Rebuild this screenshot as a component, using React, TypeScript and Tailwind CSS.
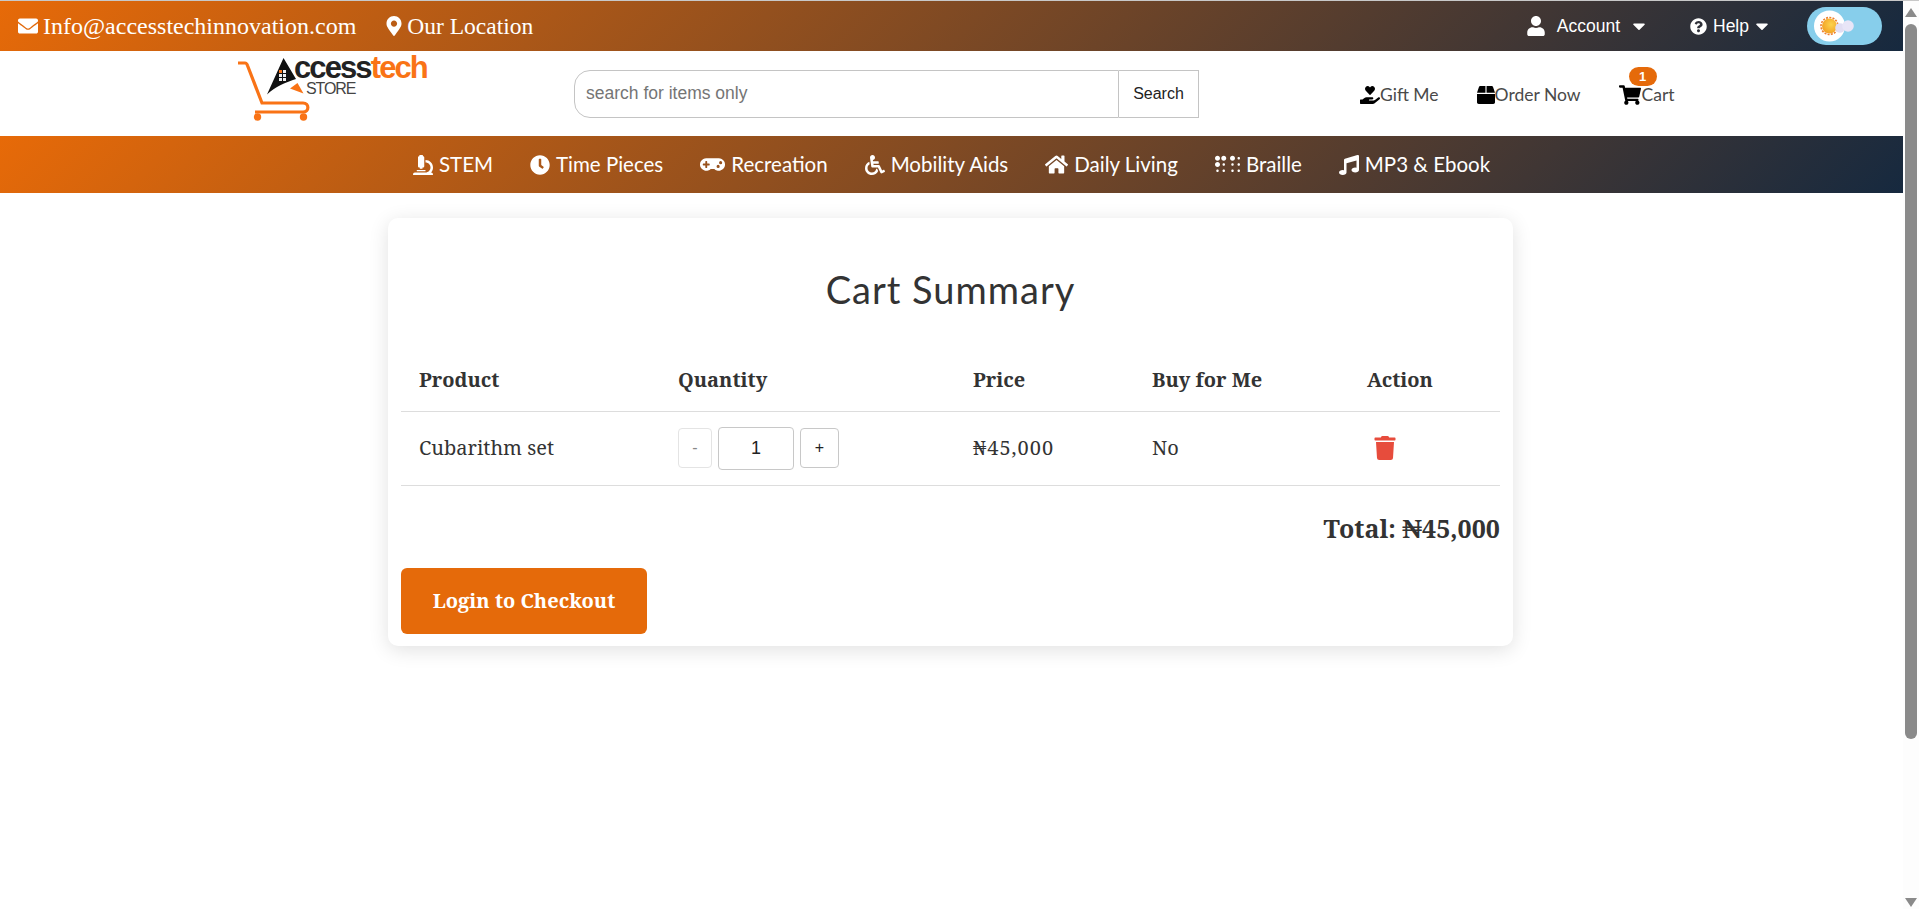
import { FaBox, FaBraille, FaCaretDown, FaClock, FaEnvelope, FaGamepad, FaHandHoldingHeart, FaHome, FaMapMarkerAlt, FaMicroscope, FaMusic, FaQuestionCircle, FaShoppingCart, FaTrash, FaUser, FaWheelchair } from 'react-icons/fa';

const navItems = [
  { label: 'STEM', icon: FaMicroscope, size: 20 },
  { label: 'Time Pieces', icon: FaClock, size: 20 },
  { label: 'Recreation', icon: FaGamepad, size: 25 },
  { label: 'Mobility Aids', icon: FaWheelchair, size: 20 },
  { label: 'Daily Living', icon: FaHome, size: 23 },
  { label: 'Braille', icon: FaBraille, size: 25 },
  { label: 'MP3 & Ebook', icon: FaMusic, size: 20 },
];

const barGradient = 'bg-[linear-gradient(135deg,#e76a08,#16293f)]';
const cellFont = "font-['Noto_Serif','DejaVu_Serif',serif]";

function Logo() {
  return (
    <div className="relative self-start mt-[4px] w-[190px] h-[70px]">
      <svg width="190" height="70" viewBox="0 0 190 70" className="absolute inset-0">
        {/* cart */}
        <path d="M1 8h7c1.5 0 2 1 2.500 2.500L25 48h41c6.500 0 6.500 9 0 9H18" fill="none" stroke="#f97316" strokeWidth="3.2" />
        <circle cx="20.500" cy="62" r="3.700" fill="#f97316" />
        <circle cx="66.500" cy="62" r="3.700" fill="#f97316" />
        {/* roof */}
        <path d="M46.500 3 30 39.500C38 32 49 27 59 24z" fill="#111" />
        <path d="M53 33.500 60.500 28l6 10.500z" fill="#f97316" />
        {/* windows */}
        <g fill="#eee">
          <rect x="42" y="15" width="3" height="3" fill="#f97316" />
          <rect x="46" y="15" width="3" height="3" />
          <rect x="42" y="19" width="3" height="3" />
          <rect x="46" y="19" width="3" height="3" />
          <rect x="42" y="23" width="3" height="3" />
          <rect x="46" y="23" width="3" height="3" />
        </g>
      </svg>
      <span className="absolute left-[57px] top-[-1px] font-['Liberation_Sans',sans-serif] font-bold text-[31px] leading-[28px] tracking-[-1.9px] text-[#222]">
        ccess<span className="text-[#f97316]">tech</span>
      </span>
      <span className="absolute left-[69px] top-[27px] font-['Liberation_Sans',sans-serif] text-[16px] leading-[14px] tracking-[-1.1px] text-[#444]">STORE</span>
    </div>
  );
}

function ThemeToggle() {
  return (
    <div className="w-[75px] h-[38px] rounded-full bg-[#87ceeb]">
      <svg width="75" height="38" viewBox="0 0 75 38">
        <defs>
          <radialGradient id="sun" cx="0.6" cy="0.4" r="0.7">
            <stop offset="0" stopColor="#fcd34d" />
            <stop offset="1" stopColor="#f29c1f" />
          </radialGradient>
        </defs>
        <circle cx="22.500" cy="19" r="15.500" fill="#fff" />
        <circle cx="22.500" cy="19" r="8.500" fill="none" stroke="#ee7f2d" strokeWidth="1.600" strokeDasharray="2 1.300" />
        <circle cx="22.500" cy="19" r="7.500" fill="url(#sun)" />
        <circle cx="33" cy="21" r="4.800" fill="#e2def3" />
        <circle cx="41" cy="19" r="5.800" fill="#e8e5f7" />
      </svg>
    </div>
  );
}

export default function App() {
  return (
    <div className="flex h-[909px] overflow-hidden bg-white border-t border-[#c8c8c8]">
      <div className="flex-1 min-w-0">
        {/* Top bar */}
        <div className={`h-[50px] flex items-center justify-between pl-[18px] pr-[21px] text-white ${barGradient}`}>
          <div className="flex items-center gap-[28px] font-['Liberation_Serif',serif] text-[24px] leading-[28px] -mt-[1px]">
            <span className="flex items-center gap-[5px]"><FaEnvelope size={20} />Info@accesstechinnovation.com</span>
            <span className="flex items-center gap-[3px] text-[23.5px]"><FaMapMarkerAlt size={20} />Our Location</span>
          </div>
          <div className="flex items-center font-['Liberation_Sans',sans-serif] text-[17.5px]">
            <FaUser size={20} />
            <span className="ml-[11px]">Account</span>
            <FaCaretDown size={20} className="ml-[9px]" />
            <FaQuestionCircle size={17} className="ml-[41px]" />
            <span className="ml-[6px]">Help</span>
            <FaCaretDown size={20} className="ml-[3px]" />
            <div className="ml-[35px]"><ThemeToggle /></div>
          </div>
        </div>

        {/* Logo, search and shortcuts */}
        <div className="h-[85px] flex items-center pl-[237px]">
          <Logo />
          <div className="ml-[147px] flex h-[48px] w-[625px] font-['Liberation_Sans',sans-serif]">
            <div className="flex-1 flex items-center pl-[11px] border border-[#c4c4c4] rounded-l-[16px] text-[17.5px] text-[#757575]">search for items only</div>
            <div className="w-[80px] flex items-center justify-center border border-l-0 border-[#c4c4c4] text-[16px] text-[#222]">Search</div>
          </div>
          <div className="ml-[161px] mt-[3px] flex items-center gap-[38px] font-['Lato',sans-serif] text-[17.5px] text-[#4a4a4a]">
            <span className="flex items-center"><FaHandHoldingHeart size={20} className="text-black" />Gift Me</span>
            <span className="flex items-center"><FaBox size={18} className="text-black" />Order Now</span>
            <span className="relative flex items-center">
              <FaShoppingCart size={22} className="text-black" />
              <span className="ml-[1px]">Cart</span>
              <span className="absolute -top-[15px] left-[10px] w-[28px] h-[19px] rounded-full bg-[#e56a0a] text-white text-[13px] font-bold flex items-center justify-center font-['Liberation_Sans',sans-serif]">1</span>
            </span>
          </div>
        </div>

        {/* Category nav */}
        <div className={`h-[57px] flex items-center justify-center gap-[37px] font-['Lato',sans-serif] text-[20.5px] text-white ${barGradient}`}>
          {navItems.map(({ label, icon: Icon, size }) => (
            <span key={label} className="flex items-center gap-[6px]"><Icon size={size} />{label}</span>
          ))}
        </div>

        {/* Cart card */}
        <div className="mt-[25px] ml-[388px] w-[1125px] h-[428px] rounded-[10px] bg-white px-[13px] pt-[49px] shadow-[0_4px_20px_rgba(0,0,0,0.12)]">
          <h1 className="text-center font-['Lato',sans-serif] text-[38px] leading-[44px] tracking-[1px] text-[#333]">Cart Summary</h1>
          <table className={`mt-[38px] w-[1099px] table-fixed text-left text-[20px] text-[#333] ${cellFont}`}>
            <thead>
              <tr className="h-[62px] border-b border-[#ddd]">
                <th className="w-[277px] pl-[18px] font-bold">Product</th>
                <th className="w-[295px] font-bold">Quantity</th>
                <th className="w-[179px] font-bold">Price</th>
                <th className="w-[215px] font-bold">Buy for Me</th>
                <th className="font-bold">Action</th>
              </tr>
            </thead>
            <tbody>
              <tr className="h-[74px] border-b border-[#ddd]">
                <td className="pl-[18px]">Cubarithm set</td>
                <td>
                  <div className="flex items-center gap-[6px] font-['Liberation_Sans',sans-serif]">
                    <div className="w-[34px] h-[40px] flex items-center justify-center rounded-[4px] border border-[#e4e4e4] text-[16px] text-[#888]">-</div>
                    <div className="w-[76px] h-[43px] flex items-center justify-center rounded-[4px] border border-[#c8c8c8] text-[18px] text-[#222]">1</div>
                    <div className="w-[39px] h-[40px] flex items-center justify-center rounded-[4px] border border-[#c8c8c8] text-[16px] text-[#222]">+</div>
                  </div>
                </td>
                <td className="tracking-[1px]">₦45,000</td>
                <td>No</td>
                <td><FaTrash size={24} className="ml-[6px] text-[#e74c3c]" /></td>
              </tr>
            </tbody>
          </table>
          <div className={`mt-[27px] text-right font-bold text-[25px] leading-[30px] text-[#333] ${cellFont}`}>Total: ₦45,000</div>
          <div className={`mt-[25px] w-[246px] h-[66px] flex items-center justify-center rounded-[6px] bg-[#e56a0a] text-white font-bold text-[20px] ${cellFont}`}>Login to Checkout</div>
        </div>
      </div>

      {/* Scrollbar */}
      <div className="w-[16px] flex flex-col items-center bg-[#fdfdfd] pt-[7px] pb-[2px]">
        <svg width="12" height="9" viewBox="0 0 12 9"><path d="M6 0 12 9H0z" fill="#8a8a8a" /></svg>
        <div className="mt-[7px] w-[12px] h-[715px] rounded-full bg-[#8a8a8a]" />
        <div className="flex-1" />
        <svg width="12" height="9" viewBox="0 0 12 9"><path d="M0 0h12L6 9z" fill="#8a8a8a" /></svg>
      </div>
    </div>
  );
}
